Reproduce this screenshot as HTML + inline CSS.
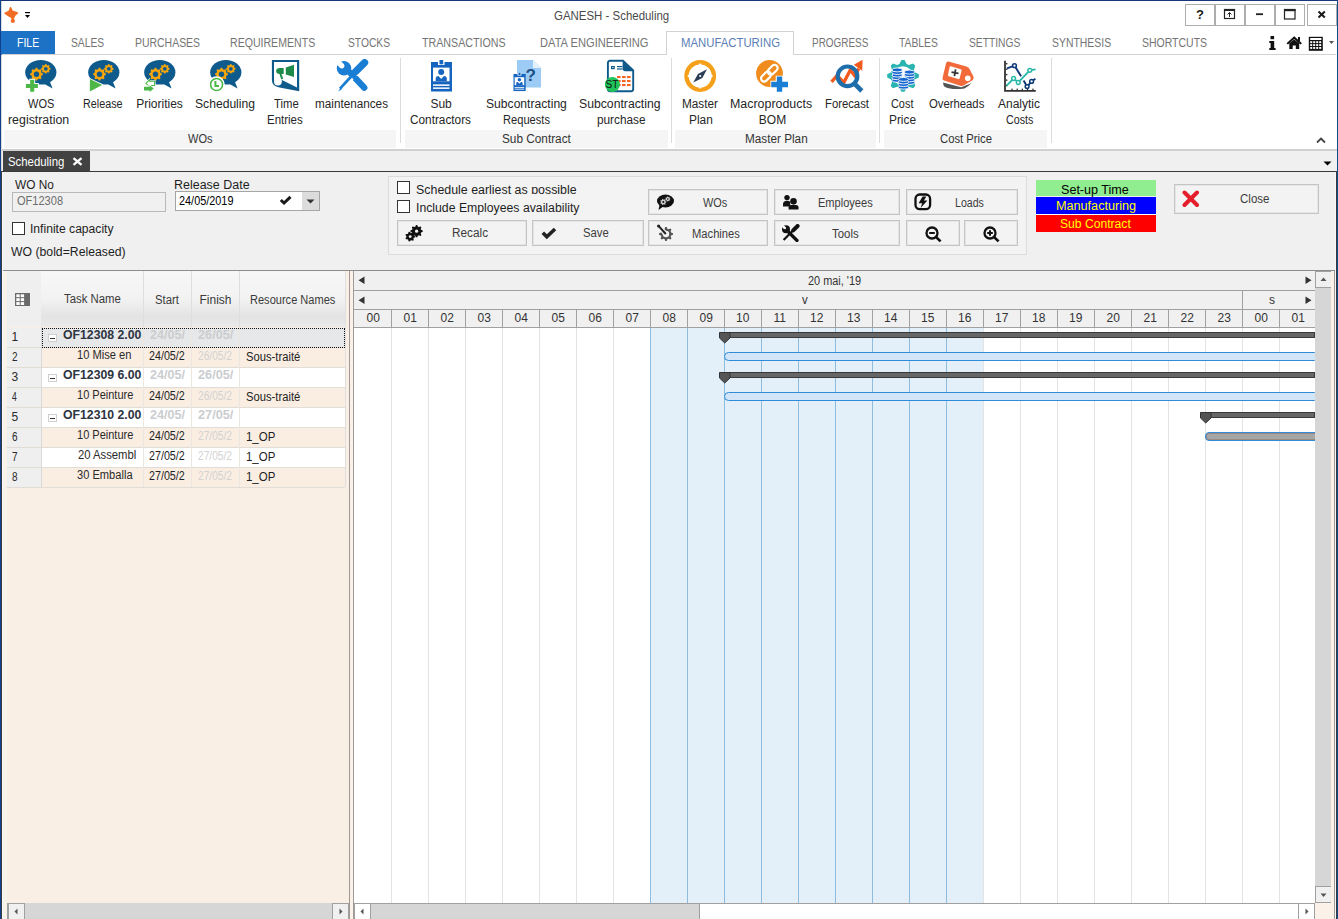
<!DOCTYPE html><html><head><meta charset="utf-8"><style>html,body{margin:0;padding:0;}body{width:1338px;height:919px;overflow:hidden;position:relative;background:#ffffff;font-family:'Liberation Sans', sans-serif;}.a{position:absolute;}</style></head><body><div class="a" style="left:0px;top:0px;width:1338px;height:919px;background:#ffffff;"></div>
<div class="a" style="left:0px;top:151px;width:1338px;height:768px;background:#f0f0f0;"></div>
<div class="a" style="left:553.50px;top:10px;font:400 12px/12px 'Liberation Sans', sans-serif;color:#4a4a4a;white-space:nowrap;transform:scaleX(0.9542);transform-origin:0 0;">GANESH - Scheduling</div>
<svg class="a" style="left:4px;top:6px;" width="16" height="18" viewBox="0 0 16 18"><path d="M6.5 1.6 L8.3 5.2 L13.4 7 L10.6 9.6 L9.6 12 L7.2 11 L4.8 9.8 L1 7.2 L5 5.4 Z" fill="#f26c23" stroke="#f26c23" stroke-width="1.4" stroke-linejoin="round"/><path d="M8 10.5 L8.8 14" stroke="#f26c23" stroke-width="2.2"/><circle cx="8.8" cy="14.9" r="2.1" fill="#f26c23"/></svg><svg class="a" style="left:24px;top:11px;" width="8" height="8" viewBox="0 0 8 8"><rect x="1" y="1" width="5" height="1.2" fill="#000"/><path d="M1 3.9 L6 3.9 L3.5 6.9 Z" fill="#000"/></svg>
<div class="a" style="left:1185px;top:4px;width:30px;height:22px;box-sizing:border-box;background:#ffffff;border:1px solid #adadad;"></div>
<div class="a" style="left:1215px;top:4px;width:30px;height:22px;box-sizing:border-box;background:#ffffff;border:1px solid #adadad;"></div>
<div class="a" style="left:1245px;top:4px;width:30px;height:22px;box-sizing:border-box;background:#ffffff;border:1px solid #adadad;"></div>
<div class="a" style="left:1275px;top:4px;width:30px;height:22px;box-sizing:border-box;background:#ffffff;border:1px solid #adadad;"></div>
<div class="a" style="left:1307px;top:4px;width:30px;height:22px;box-sizing:border-box;background:#ffffff;border:1px solid #adadad;"></div>
<svg class="a" style="left:1194px;top:8px;" width="12" height="13" viewBox="0 0 12 13"><text x="6" y="11" text-anchor="middle" font-family="Liberation Sans" font-weight="700" font-size="13" fill="#1a1a1a">?</text></svg><svg class="a" style="left:1223px;top:8px;" width="14" height="12" viewBox="0 0 14 12"><rect x="1.5" y="1.5" width="10" height="9" fill="none" stroke="#222" stroke-width="1.2"/><rect x="1" y="1" width="11" height="2" fill="#222"/><path d="M6.5 9 V4.5 M4.5 6.5 L6.5 4.5 L8.5 6.5" fill="none" stroke="#222" stroke-width="1"/></svg><svg class="a" style="left:1255px;top:12px;" width="10" height="4" viewBox="0 0 10 4"><rect x="1" y="1.3" width="7" height="1.8" fill="#222"/></svg><svg class="a" style="left:1283px;top:8px;" width="14" height="12" viewBox="0 0 14 12"><rect x="1.5" y="1.5" width="10.5" height="9.5" fill="none" stroke="#222" stroke-width="1.2"/><rect x="1" y="1" width="11.5" height="2.2" fill="#222"/></svg><svg class="a" style="left:1317px;top:10px;" width="10" height="9" viewBox="0 0 10 9"><path d="M1.5 1.5 L7.8 7.5 M7.8 1.5 L1.5 7.5" stroke="#1a1a1a" stroke-width="2"/></svg>
<div class="a" style="left:1px;top:31px;width:54px;height:24px;background:#1e72c6;"></div>
<div class="a" style="left:16.73px;top:37.2px;font:400 12px/12px 'Liberation Sans', sans-serif;color:#ffffff;white-space:nowrap;transform:scaleX(0.8750);transform-origin:0 0;">FILE</div>
<div class="a" style="left:2px;top:54px;width:1334px;height:1px;background:#d2d2d2;"></div>
<div class="a" style="left:666px;top:31px;width:128px;height:24px;box-sizing:border-box;background:#ffffff;border:1px solid #d2d2d2;border-bottom:none;"></div>
<div class="a" style="left:70.54px;top:37px;font:400 12px/12px 'Liberation Sans', sans-serif;color:#747474;white-space:nowrap;transform:scaleX(0.8568);transform-origin:0 0;">SALES</div>
<div class="a" style="left:134.63px;top:37px;font:400 12px/12px 'Liberation Sans', sans-serif;color:#747474;white-space:nowrap;transform:scaleX(0.8712);transform-origin:0 0;">PURCHASES</div>
<div class="a" style="left:230.42px;top:37px;font:400 12px/12px 'Liberation Sans', sans-serif;color:#747474;white-space:nowrap;transform:scaleX(0.8811);transform-origin:0 0;">REQUIREMENTS</div>
<div class="a" style="left:348.15px;top:37px;font:400 12px/12px 'Liberation Sans', sans-serif;color:#747474;white-space:nowrap;transform:scaleX(0.8542);transform-origin:0 0;">STOCKS</div>
<div class="a" style="left:422.40px;top:37px;font:400 12px/12px 'Liberation Sans', sans-serif;color:#747474;white-space:nowrap;transform:scaleX(0.8904);transform-origin:0 0;">TRANSACTIONS</div>
<div class="a" style="left:540.47px;top:37px;font:400 12px/12px 'Liberation Sans', sans-serif;color:#747474;white-space:nowrap;transform:scaleX(0.9278);transform-origin:0 0;">DATA ENGINEERING</div>
<div class="a" style="left:680.65px;top:37px;font:400 12px/12px 'Liberation Sans', sans-serif;color:#5b7fb4;white-space:nowrap;transform:scaleX(0.9456);transform-origin:0 0;">MANUFACTURING</div>
<div class="a" style="left:811.67px;top:37px;font:400 12px/12px 'Liberation Sans', sans-serif;color:#747474;white-space:nowrap;transform:scaleX(0.8284);transform-origin:0 0;">PROGRESS</div>
<div class="a" style="left:899.30px;top:37px;font:400 12px/12px 'Liberation Sans', sans-serif;color:#747474;white-space:nowrap;transform:scaleX(0.8600);transform-origin:0 0;">TABLES</div>
<div class="a" style="left:969.15px;top:37px;font:400 12px/12px 'Liberation Sans', sans-serif;color:#747474;white-space:nowrap;transform:scaleX(0.8542);transform-origin:0 0;">SETTINGS</div>
<div class="a" style="left:1052.13px;top:37px;font:400 12px/12px 'Liberation Sans', sans-serif;color:#747474;white-space:nowrap;transform:scaleX(0.8687);transform-origin:0 0;">SYNTHESIS</div>
<div class="a" style="left:1142.33px;top:37px;font:400 12px/12px 'Liberation Sans', sans-serif;color:#747474;white-space:nowrap;transform:scaleX(0.8740);transform-origin:0 0;">SHORTCUTS</div>
<svg class="a" style="left:1268px;top:35px;" width="9" height="16" viewBox="0 0 9 16"><rect x="2.5" y="1" width="3.6" height="3.2" fill="#111"/><path d="M1.3 6 H6.2 V13 H7.6 V15 H1.3 V13 H2.6 V8 H1.3 Z" fill="#111"/></svg><svg class="a" style="left:1286px;top:35px;" width="17" height="15" viewBox="0 0 17 15"><path d="M8.2 1.2 L16 8.2 L14.4 9.4 L8.2 4 L2 9.4 L0.5 8.2 Z" fill="#111"/><path d="M3.3 8.3 L8.2 4.4 L13.2 8.3 V14 H9.8 V10.5 H6.7 V14 H3.3 Z" fill="#111"/><rect x="12" y="2" width="2" height="4" fill="#111"/></svg><svg class="a" style="left:1308px;top:36px;" width="16" height="16" viewBox="0 0 16 16"><rect x="0.8" y="0.8" width="14" height="14" fill="#111"/><rect x="2.2" y="2" width="11.2" height="2" fill="#fff"/><rect x="2.2" y="5.2" width="2" height="1.9" fill="#fff"/><rect x="5.2" y="5.2" width="2" height="1.9" fill="#fff"/><rect x="8.2" y="5.2" width="2" height="1.9" fill="#fff"/><rect x="11.2" y="5.2" width="2" height="1.9" fill="#fff"/><rect x="2.2" y="8.1" width="2" height="1.9" fill="#fff"/><rect x="5.2" y="8.1" width="2" height="1.9" fill="#fff"/><rect x="8.2" y="8.1" width="2" height="1.9" fill="#fff"/><rect x="11.2" y="8.1" width="2" height="1.9" fill="#fff"/><rect x="2.2" y="11.0" width="2" height="1.9" fill="#fff"/><rect x="5.2" y="11.0" width="2" height="1.9" fill="#fff"/><rect x="8.2" y="11.0" width="2" height="1.9" fill="#fff"/><rect x="11.2" y="11.0" width="2" height="1.9" fill="#fff"/></svg><svg class="a" style="left:1328px;top:40px;" width="7" height="5" viewBox="0 0 7 5"><path d="M1 1 L6 1 L3.5 4 Z" fill="#555"/></svg>
<div class="a" style="left:4px;top:130px;width:392px;height:18px;background:#f5f5f5;"></div>
<div class="a" style="left:405px;top:130px;width:263px;height:18px;background:#f5f5f5;"></div>
<div class="a" style="left:675px;top:130px;width:201px;height:18px;background:#f5f5f5;"></div>
<div class="a" style="left:884px;top:130px;width:163px;height:18px;background:#f5f5f5;"></div>
<div class="a" style="left:400px;top:58px;width:1px;height:85px;background:#dcdcdc;"></div>
<div class="a" style="left:671px;top:58px;width:1px;height:85px;background:#dcdcdc;"></div>
<div class="a" style="left:879px;top:58px;width:1px;height:85px;background:#dcdcdc;"></div>
<div class="a" style="left:1051px;top:58px;width:1px;height:85px;background:#dcdcdc;"></div>
<div class="a" style="left:1px;top:149px;width:1336px;height:2px;background:#d0d0d0;"></div>
<div class="a" style="left:188.20px;top:133px;font:400 12px/12px 'Liberation Sans', sans-serif;color:#333333;white-space:nowrap;transform:scaleX(0.9185);transform-origin:0 0;">WOs</div>
<div class="a" style="left:502.32px;top:133px;font:400 12px/12px 'Liberation Sans', sans-serif;color:#333333;white-space:nowrap;transform:scaleX(0.9826);transform-origin:0 0;">Sub Contract</div>
<div class="a" style="left:744.82px;top:133px;font:400 12px/12px 'Liberation Sans', sans-serif;color:#333333;white-space:nowrap;transform:scaleX(0.9790);transform-origin:0 0;">Master Plan</div>
<div class="a" style="left:940.10px;top:133px;font:400 12px/12px 'Liberation Sans', sans-serif;color:#333333;white-space:nowrap;transform:scaleX(0.9400);transform-origin:0 0;">Cost Price</div>
<div class="a" style="left:27.50px;top:98px;font:400 12px/12px 'Liberation Sans', sans-serif;color:#262626;white-space:nowrap;transform:scaleX(0.9179);transform-origin:0 0;">WOS</div>
<div class="a" style="left:7.97px;top:114px;font:400 12px/12px 'Liberation Sans', sans-serif;color:#262626;white-space:nowrap;transform:scaleX(1.0310);transform-origin:0 0;">registration</div>
<div class="a" style="left:83.40px;top:98px;font:400 12px/12px 'Liberation Sans', sans-serif;color:#262626;white-space:nowrap;transform:scaleX(0.8977);transform-origin:0 0;">Release</div>
<div class="a" style="left:136.20px;top:98px;font:400 12px/12px 'Liberation Sans', sans-serif;color:#262626;white-space:nowrap;">Priorities</div>
<div class="a" style="left:195.09px;top:98px;font:400 12px/12px 'Liberation Sans', sans-serif;color:#262626;white-space:nowrap;transform:scaleX(1.0103);transform-origin:0 0;">Scheduling</div>
<div class="a" style="left:273.50px;top:98px;font:400 12px/12px 'Liberation Sans', sans-serif;color:#262626;white-space:nowrap;transform:scaleX(0.9423);transform-origin:0 0;">Time</div>
<div class="a" style="left:266.64px;top:114px;font:400 12px/12px 'Liberation Sans', sans-serif;color:#262626;white-space:nowrap;transform:scaleX(0.9556);transform-origin:0 0;">Entries</div>
<div class="a" style="left:315.32px;top:98px;font:400 12px/12px 'Liberation Sans', sans-serif;color:#262626;white-space:nowrap;transform:scaleX(0.9770);transform-origin:0 0;">maintenances</div>
<div class="a" style="left:430.40px;top:98px;font:400 12px/12px 'Liberation Sans', sans-serif;color:#262626;white-space:nowrap;">Sub</div>
<div class="a" style="left:409.90px;top:114px;font:400 12px/12px 'Liberation Sans', sans-serif;color:#262626;white-space:nowrap;transform:scaleX(0.9839);transform-origin:0 0;">Contractors</div>
<div class="a" style="left:485.69px;top:98px;font:400 12px/12px 'Liberation Sans', sans-serif;color:#262626;white-space:nowrap;transform:scaleX(1.0101);transform-origin:0 0;">Subcontracting</div>
<div class="a" style="left:502.77px;top:114px;font:400 12px/12px 'Liberation Sans', sans-serif;color:#262626;white-space:nowrap;transform:scaleX(0.9260);transform-origin:0 0;">Requests</div>
<div class="a" style="left:579.28px;top:98px;font:400 12px/12px 'Liberation Sans', sans-serif;color:#262626;white-space:nowrap;transform:scaleX(1.0177);transform-origin:0 0;">Subcontracting</div>
<div class="a" style="left:596.92px;top:114px;font:400 12px/12px 'Liberation Sans', sans-serif;color:#262626;white-space:nowrap;transform:scaleX(0.9833);transform-origin:0 0;">purchase</div>
<div class="a" style="left:681.52px;top:98px;font:400 12px/12px 'Liberation Sans', sans-serif;color:#262626;white-space:nowrap;transform:scaleX(0.9806);transform-origin:0 0;">Master</div>
<div class="a" style="left:689.01px;top:114px;font:400 12px/12px 'Liberation Sans', sans-serif;color:#262626;white-space:nowrap;transform:scaleX(0.9909);transform-origin:0 0;">Plan</div>
<div class="a" style="left:730.37px;top:98px;font:400 12px/12px 'Liberation Sans', sans-serif;color:#262626;white-space:nowrap;transform:scaleX(1.0346);transform-origin:0 0;">Macroproducts</div>
<div class="a" style="left:758.80px;top:114px;font:400 12px/12px 'Liberation Sans', sans-serif;color:#262626;white-space:nowrap;">BOM</div>
<div class="a" style="left:824.66px;top:98px;font:400 12px/12px 'Liberation Sans', sans-serif;color:#262626;white-space:nowrap;transform:scaleX(0.9413);transform-origin:0 0;">Forecast</div>
<div class="a" style="left:891.30px;top:98px;font:400 12px/12px 'Liberation Sans', sans-serif;color:#262626;white-space:nowrap;transform:scaleX(0.9080);transform-origin:0 0;">Cost</div>
<div class="a" style="left:888.51px;top:114px;font:400 12px/12px 'Liberation Sans', sans-serif;color:#262626;white-space:nowrap;transform:scaleX(0.9885);transform-origin:0 0;">Price</div>
<div class="a" style="left:929.30px;top:98px;font:400 12px/12px 'Liberation Sans', sans-serif;color:#262626;white-space:nowrap;transform:scaleX(0.9424);transform-origin:0 0;">Overheads</div>
<div class="a" style="left:998.00px;top:98px;font:400 12px/12px 'Liberation Sans', sans-serif;color:#262626;white-space:nowrap;">Analytic</div>
<div class="a" style="left:1006.40px;top:114px;font:400 12px/12px 'Liberation Sans', sans-serif;color:#262626;white-space:nowrap;transform:scaleX(0.8903);transform-origin:0 0;">Costs</div>
<svg class="a" style="left:25px;top:59px;" width="33" height="34" viewBox="0 0 33 34"><ellipse cx="15.8" cy="13.2" rx="15.6" ry="12.3" fill="#0e5a8c"/><path d="M14 22 L27.6 29.6 L24 20.5 Z" fill="#0e5a8c"/><path d="M17.87 14.57 L17.87 15.83 L16.38 16.68 L16.00 17.60 L16.45 19.26 L15.56 20.15 L13.90 19.70 L12.98 20.08 L12.13 21.57 L10.87 21.57 L10.02 20.08 L9.10 19.70 L7.44 20.15 L6.55 19.26 L7.00 17.60 L6.62 16.68 L5.13 15.83 L5.13 14.57 L6.62 13.72 L7.00 12.80 L6.55 11.14 L7.44 10.25 L9.10 10.70 L10.02 10.32 L10.87 8.83 L12.13 8.83 L12.98 10.32 L13.90 10.70 L15.56 10.25 L16.45 11.14 L16.00 12.80 L16.38 13.72Z" fill="#f7a50c"/><circle cx="11.5" cy="15.2" r="2.7" fill="#0e5a8c"/><path d="M25.58 9.33 L25.58 10.27 L24.44 10.90 L24.15 11.59 L24.51 12.85 L23.85 13.51 L22.59 13.15 L21.90 13.44 L21.27 14.58 L20.33 14.58 L19.70 13.44 L19.01 13.15 L17.75 13.51 L17.09 12.85 L17.45 11.59 L17.16 10.90 L16.02 10.27 L16.02 9.33 L17.16 8.70 L17.45 8.01 L17.09 6.75 L17.75 6.09 L19.01 6.45 L19.70 6.16 L20.33 5.02 L21.27 5.02 L21.90 6.16 L22.59 6.45 L23.85 6.09 L24.51 6.75 L24.15 8.01 L24.44 8.70Z" fill="#f7a50c"/><circle cx="20.8" cy="9.8" r="1.9" fill="#0e5a8c"/><path d="M0 27 H13.8 M7.2 19.8 V33.8" stroke="#fff" stroke-width="6"/><path d="M0.9 27 H12.9 M7.2 20.8 V32.8" stroke="#4db848" stroke-width="4.1"/></svg><svg class="a" style="left:88px;top:59px;" width="33" height="34" viewBox="0 0 33 34"><ellipse cx="15.8" cy="13.2" rx="15.6" ry="12.3" fill="#0e5a8c"/><path d="M14 22 L27.6 29.6 L24 20.5 Z" fill="#0e5a8c"/><path d="M17.87 14.57 L17.87 15.83 L16.38 16.68 L16.00 17.60 L16.45 19.26 L15.56 20.15 L13.90 19.70 L12.98 20.08 L12.13 21.57 L10.87 21.57 L10.02 20.08 L9.10 19.70 L7.44 20.15 L6.55 19.26 L7.00 17.60 L6.62 16.68 L5.13 15.83 L5.13 14.57 L6.62 13.72 L7.00 12.80 L6.55 11.14 L7.44 10.25 L9.10 10.70 L10.02 10.32 L10.87 8.83 L12.13 8.83 L12.98 10.32 L13.90 10.70 L15.56 10.25 L16.45 11.14 L16.00 12.80 L16.38 13.72Z" fill="#f7a50c"/><circle cx="11.5" cy="15.2" r="2.7" fill="#0e5a8c"/><path d="M25.58 9.33 L25.58 10.27 L24.44 10.90 L24.15 11.59 L24.51 12.85 L23.85 13.51 L22.59 13.15 L21.90 13.44 L21.27 14.58 L20.33 14.58 L19.70 13.44 L19.01 13.15 L17.75 13.51 L17.09 12.85 L17.45 11.59 L17.16 10.90 L16.02 10.27 L16.02 9.33 L17.16 8.70 L17.45 8.01 L17.09 6.75 L17.75 6.09 L19.01 6.45 L19.70 6.16 L20.33 5.02 L21.27 5.02 L21.90 6.16 L22.59 6.45 L23.85 6.09 L24.51 6.75 L24.15 8.01 L24.44 8.70Z" fill="#f7a50c"/><circle cx="20.8" cy="9.8" r="1.9" fill="#0e5a8c"/><path d="M0.5 18.5 L15.5 25.5 L0.5 33 Z" fill="#fff"/><path d="M1.9 20 L14.2 26 L1.9 32.5 Z" fill="#4db848"/></svg><svg class="a" style="left:144px;top:59px;" width="33" height="34" viewBox="0 0 33 34"><ellipse cx="15.8" cy="13.2" rx="15.6" ry="12.3" fill="#0e5a8c"/><path d="M14 22 L27.6 29.6 L24 20.5 Z" fill="#0e5a8c"/><path d="M17.87 14.57 L17.87 15.83 L16.38 16.68 L16.00 17.60 L16.45 19.26 L15.56 20.15 L13.90 19.70 L12.98 20.08 L12.13 21.57 L10.87 21.57 L10.02 20.08 L9.10 19.70 L7.44 20.15 L6.55 19.26 L7.00 17.60 L6.62 16.68 L5.13 15.83 L5.13 14.57 L6.62 13.72 L7.00 12.80 L6.55 11.14 L7.44 10.25 L9.10 10.70 L10.02 10.32 L10.87 8.83 L12.13 8.83 L12.98 10.32 L13.90 10.70 L15.56 10.25 L16.45 11.14 L16.00 12.80 L16.38 13.72Z" fill="#f7a50c"/><circle cx="11.5" cy="15.2" r="2.7" fill="#0e5a8c"/><path d="M25.58 9.33 L25.58 10.27 L24.44 10.90 L24.15 11.59 L24.51 12.85 L23.85 13.51 L22.59 13.15 L21.90 13.44 L21.27 14.58 L20.33 14.58 L19.70 13.44 L19.01 13.15 L17.75 13.51 L17.09 12.85 L17.45 11.59 L17.16 10.90 L16.02 10.27 L16.02 9.33 L17.16 8.70 L17.45 8.01 L17.09 6.75 L17.75 6.09 L19.01 6.45 L19.70 6.16 L20.33 5.02 L21.27 5.02 L21.90 6.16 L22.59 6.45 L23.85 6.09 L24.51 6.75 L24.15 8.01 L24.44 8.70Z" fill="#f7a50c"/><circle cx="20.8" cy="9.8" r="1.9" fill="#0e5a8c"/><path d="M0.5 24.3 L6 18.8 V21.2 H11.6 V27.5 H6 V29.8 Z" fill="#fff"/><path d="M1.9 24.3 L5.6 20.6 V22.3 H10.6 V26.5 H5.6 V28 Z" fill="#fff" stroke="#4db848" stroke-width="1.1"/><path d="M-0.5 26.5 H5 V24.8 L11 29.6 L5 34.3 V32.6 H-0.5 Z" fill="#fff"/><path d="M0 27.7 H5.6 V26.2 L9.8 29.6 L5.6 33 V31.5 H0 Z" fill="#4db848"/></svg><svg class="a" style="left:210px;top:59px;" width="33" height="34" viewBox="0 0 33 34"><ellipse cx="15.8" cy="13.2" rx="15.6" ry="12.3" fill="#0e5a8c"/><path d="M14 22 L27.6 29.6 L24 20.5 Z" fill="#0e5a8c"/><path d="M17.87 14.57 L17.87 15.83 L16.38 16.68 L16.00 17.60 L16.45 19.26 L15.56 20.15 L13.90 19.70 L12.98 20.08 L12.13 21.57 L10.87 21.57 L10.02 20.08 L9.10 19.70 L7.44 20.15 L6.55 19.26 L7.00 17.60 L6.62 16.68 L5.13 15.83 L5.13 14.57 L6.62 13.72 L7.00 12.80 L6.55 11.14 L7.44 10.25 L9.10 10.70 L10.02 10.32 L10.87 8.83 L12.13 8.83 L12.98 10.32 L13.90 10.70 L15.56 10.25 L16.45 11.14 L16.00 12.80 L16.38 13.72Z" fill="#f7a50c"/><circle cx="11.5" cy="15.2" r="2.7" fill="#0e5a8c"/><path d="M25.58 9.33 L25.58 10.27 L24.44 10.90 L24.15 11.59 L24.51 12.85 L23.85 13.51 L22.59 13.15 L21.90 13.44 L21.27 14.58 L20.33 14.58 L19.70 13.44 L19.01 13.15 L17.75 13.51 L17.09 12.85 L17.45 11.59 L17.16 10.90 L16.02 10.27 L16.02 9.33 L17.16 8.70 L17.45 8.01 L17.09 6.75 L17.75 6.09 L19.01 6.45 L19.70 6.16 L20.33 5.02 L21.27 5.02 L21.90 6.16 L22.59 6.45 L23.85 6.09 L24.51 6.75 L24.15 8.01 L24.44 8.70Z" fill="#f7a50c"/><circle cx="20.8" cy="9.8" r="1.9" fill="#0e5a8c"/><circle cx="6.6" cy="25.5" r="8.2" fill="#fff"/><circle cx="6.6" cy="25.5" r="6" fill="#fff" stroke="#4db848" stroke-width="1.6"/><path d="M5.4 22 V27 H9" fill="none" stroke="#4db848" stroke-width="2"/></svg><svg class="a" style="left:271px;top:59px;" width="30" height="33" viewBox="0 0 30 33"><path d="M0.9 0.9 H28.2 V32.2 L8.5 28.6 Q0.9 27.2 0.9 21 Z" fill="#0e5a8a"/><path d="M3 3 H26 V28.6 L11.5 21.2 L3 21.2 Z" fill="#fff"/><circle cx="6.9" cy="22.6" r="3.9" fill="#fff"/><path d="M12.7 9 H9 Q5.1 9 5.1 12 Q5.1 15 9 15 H12.7 Z" fill="#1e8a4a"/><path d="M9.4 15 L11.3 20.1" stroke="#1e8a4a" stroke-width="2"/><path d="M14.8 8.6 L23 5.7 V18.1 L14.8 15.6 Z" fill="#1e8a4a"/></svg><svg class="a" style="left:336px;top:59px;" width="34" height="34" viewBox="0 0 34 34"><path d="M14.5 14 L28.2 28.6" stroke="#1a7fd4" stroke-width="6.4" stroke-linecap="round"/><circle cx="8" cy="9.3" r="7.2" fill="#1a7fd4"/><path d="M5.6 6.6 L0.2 1.2" stroke="#fff" stroke-width="5.2"/><circle cx="5.8" cy="6.8" r="2.6" fill="#fff"/><path d="M16.4 15.3 L19.5 18.6" stroke="#fff" stroke-width="7.6"/><path d="M28.6 3.6 L19.2 13" stroke="#1a7fd4" stroke-width="7.2" stroke-linecap="round"/><path d="M19.5 12.5 L15.5 16.8" stroke="#1a7fd4" stroke-width="4.6"/><path d="M16.5 16 L4 29.6" stroke="#1a7fd4" stroke-width="2.8"/><path d="M4.6 28.6 L2.2 32.4 L5.8 30.2 Z" fill="#1a7fd4"/><path d="M15 14.2 L20 19.6" stroke="#1a7fd4" stroke-width="4.6"/></svg><svg class="a" style="left:431px;top:60px;" width="21" height="32" viewBox="0 0 21 32"><rect x="0" y="2" width="21" height="29.5" fill="#1565c0"/><rect x="7" y="0" width="6.5" height="5" fill="#fff"/><rect x="8.5" y="0" width="3.7" height="4.3" fill="#1565c0"/><rect x="2" y="7.6" width="16.5" height="13.7" fill="#fff"/><circle cx="10.2" cy="12" r="3" fill="#1565c0"/><path d="M4.7 21.3 V18 Q5 16 7.5 16 L10.2 19 L13 16 Q15.5 16 15.8 18 V21.3 Z" fill="#1565c0"/><rect x="2" y="24.4" width="16.5" height="1.5" fill="#fff"/><rect x="2" y="27.4" width="16.5" height="1.5" fill="#fff"/></svg><svg class="a" style="left:512px;top:59px;" width="30" height="34" viewBox="0 0 30 34"><path d="M5 1 H21 L29 9 V28.6 H5 Z" fill="#9ccbf5"/><path d="M21 1 V9 H29 Z" fill="#e4f1fc"/><text x="18.6" y="22.4" text-anchor="middle" font-family="Liberation Sans" font-weight="700" font-size="17" fill="#1b4f86">?</text><g transform="translate(1.5 13.8) scale(0.58)"><rect x="0" y="2" width="21" height="29.5" fill="#1565c0"/><rect x="7" y="0" width="6.5" height="5" fill="#fff"/><rect x="8.5" y="0" width="3.7" height="4.3" fill="#1565c0"/><rect x="2" y="7.6" width="16.5" height="13.7" fill="#fff"/><circle cx="10.2" cy="12" r="3" fill="#1565c0"/><path d="M4.7 21.3 V18 Q5 16 7.5 16 L10.2 19 L13 16 Q15.5 16 15.8 18 V21.3 Z" fill="#1565c0"/><rect x="2" y="24.4" width="16.5" height="1.5" fill="#fff"/><rect x="2" y="27.4" width="16.5" height="1.5" fill="#fff"/></g></svg><svg class="a" style="left:604px;top:59px;" width="32" height="34" viewBox="0 0 32 34"><path d="M6 1.8 H19 L29.2 11.5 V30 Q29.2 32.2 27 32.2 H6 Q3.9 32.2 3.9 30 V4 Q3.9 1.8 6 1.8 Z" fill="#fff" stroke="#0e5a8a" stroke-width="1.9"/><path d="M18.6 1.2 L29.8 12.2 H21.4 Q18.6 12 18.6 9.5 Z" fill="#0e5a8a"/><rect x="7.6" y="7.6" width="2.6" height="2" fill="none" stroke="#0e5a8a" stroke-width="1.2"/><rect x="13" y="7" width="5.5" height="1.2" fill="#0e5a8a"/><rect x="13" y="9.4" width="5.5" height="1.2" fill="#0e5a8a"/><rect x="13" y="17" width="3.6" height="2.1" fill="#f26522"/><rect x="18" y="17" width="3.6" height="2.1" fill="#f26522"/><rect x="23" y="17" width="3.6" height="2.1" fill="#f26522"/><rect x="13" y="21" width="3.6" height="2.1" fill="#f26522"/><rect x="18" y="21" width="3.6" height="2.1" fill="#f26522"/><rect x="23" y="21" width="3.6" height="2.1" fill="#f26522"/><rect x="13" y="25" width="3.6" height="2.1" fill="#f26522"/><rect x="18" y="25" width="3.6" height="2.1" fill="#f26522"/><rect x="23" y="25" width="3.6" height="2.1" fill="#f26522"/><circle cx="8.4" cy="25.5" r="7.5" fill="#20c35a"/><text x="8" y="29" text-anchor="middle" font-family="Liberation Sans" font-size="10" fill="#111">ST</text></svg><svg class="a" style="left:684px;top:60px;" width="33" height="33" viewBox="0 0 33 33"><circle cx="16.2" cy="16" r="13.7" fill="none" stroke="#f5a01a" stroke-width="4.4"/><rect x="15.2" y="3.6" width="2" height="2" fill="#fff"/><rect x="15.2" y="26.4" width="2" height="2" fill="#fff"/><rect x="3.8" y="15" width="2" height="2" fill="#fff"/><rect x="26.6" y="15" width="2" height="2" fill="#fff"/><path d="M23 9.2 L18.3 18 L9.2 22.6 L14 14 Z" fill="#2a3b55"/><circle cx="16.2" cy="16" r="1.1" fill="#fff"/></svg><svg class="a" style="left:755px;top:59px;" width="35" height="34" viewBox="0 0 35 34"><circle cx="14.5" cy="14.5" r="13.4" fill="#f08c1e"/><g fill="none" stroke="#fff" stroke-width="2.2"><rect x="7.9" y="11.9" width="6.2" height="11.4" rx="3.1" transform="rotate(45 11 17.6)"/><rect x="14.6" y="5.1" width="6.2" height="11.4" rx="3.1" transform="rotate(45 17.7 10.8)"/></g><path d="M15.5 25.5 H33.6 M24.5 16.8 V33.4" stroke="#fff" stroke-width="7.6"/><path d="M16.2 25.5 H33 M24.5 17.6 V32.8" stroke="#1a7fd4" stroke-width="5.4"/></svg><svg class="a" style="left:830px;top:59px;" width="34" height="34" viewBox="0 0 34 34"><path d="M1.5 22.8 L7.2 16.4 L13.8 23.6 L20.3 11 L24.6 16.6 L28.8 9.6" fill="none" stroke="#f25a1e" stroke-width="3.3" stroke-linejoin="miter"/><path d="M23.8 5.8 L32.6 0.8 L32.2 11.8 Z" fill="#f25a1e"/><circle cx="17.5" cy="17.3" r="9.8" fill="none" stroke="#1f6eac" stroke-width="4.2"/><path d="M24.2 24.4 L31.8 32" stroke="#1f6eac" stroke-width="4.6"/></svg><svg class="a" style="left:886px;top:59px;" width="34" height="34" viewBox="0 0 34 34"><path d="M32.82 15.34 L32.82 18.46 L28.87 20.50 L27.94 22.75 L29.29 26.99 L27.09 29.19 L22.85 27.84 L20.60 28.77 L18.56 32.72 L15.44 32.72 L13.40 28.77 L11.15 27.84 L6.91 29.19 L4.71 26.99 L6.06 22.75 L5.13 20.50 L1.18 18.46 L1.18 15.34 L5.13 13.30 L6.06 11.05 L4.71 6.81 L6.91 4.61 L11.15 5.96 L13.40 5.03 L15.44 1.08 L18.56 1.08 L20.60 5.03 L22.85 5.96 L27.09 4.61 L29.29 6.81 L27.94 11.05 L28.87 13.30Z" fill="#2ab4b0"/><circle cx="17" cy="16.9" r="0.1" fill="#2ab4b0"/><circle cx="17" cy="16.9" r="9.6" fill="#fff"/><ellipse cx="11.2" cy="21.30" rx="5.2" ry="2" fill="#1565d0" stroke="#fff" stroke-width="0.9"/><ellipse cx="11.2" cy="18.70" rx="5.2" ry="2" fill="#1565d0" stroke="#fff" stroke-width="0.9"/><ellipse cx="11.2" cy="16.10" rx="5.2" ry="2" fill="#1565d0" stroke="#fff" stroke-width="0.9"/><ellipse cx="11.2" cy="13.50" rx="5.2" ry="2" fill="#1565d0" stroke="#fff" stroke-width="0.9"/><ellipse cx="11.2" cy="10.90" rx="5.2" ry="2" fill="#1565d0" stroke="#fff" stroke-width="0.9"/><ellipse cx="23.5" cy="23.50" rx="5.2" ry="2" fill="#1565d0" stroke="#fff" stroke-width="0.9"/><ellipse cx="23.5" cy="20.90" rx="5.2" ry="2" fill="#1565d0" stroke="#fff" stroke-width="0.9"/><ellipse cx="23.5" cy="18.30" rx="5.2" ry="2" fill="#1565d0" stroke="#fff" stroke-width="0.9"/><ellipse cx="23.5" cy="15.70" rx="5.2" ry="2" fill="#1565d0" stroke="#fff" stroke-width="0.9"/><ellipse cx="23.5" cy="13.10" rx="5.2" ry="2" fill="#1565d0" stroke="#fff" stroke-width="0.9"/><ellipse cx="17.5" cy="28.20" rx="5.2" ry="2" fill="#1565d0" stroke="#fff" stroke-width="0.9"/><ellipse cx="17.5" cy="25.60" rx="5.2" ry="2" fill="#1565d0" stroke="#fff" stroke-width="0.9"/><ellipse cx="17.5" cy="23.00" rx="5.2" ry="2" fill="#1565d0" stroke="#fff" stroke-width="0.9"/><ellipse cx="17.5" cy="20.40" rx="5.2" ry="2" fill="#1565d0" stroke="#fff" stroke-width="0.9"/></svg><svg class="a" style="left:941px;top:59px;" width="35" height="32" viewBox="0 0 35 32"><path d="M2 23.4 L20.2 28.2 L30.3 24.2 Q27 28 23.5 29.4 Q15 30.5 9 29.4 Q3.5 28.5 2.6 26.5 Z" fill="#555"/><path d="M7.6 2.6 L25.4 7.5 Q27.6 8.2 28.8 10.4 L32.4 17.6 Q33.2 19.6 31.8 21 L22.5 26.5 Q21 27.3 19.3 26.8 L3 21.6 Q1.2 21 1.5 19 L5 4.4 Q5.6 2.2 7.6 2.6 Z" fill="#f26a3a"/><path d="M9.8 7.2 L19.8 10.2 Q20.8 10.5 20.6 11.5 L18.6 19.4 Q18.3 20.4 17.3 20.1 L7.8 17.2 Q6.8 16.9 7 15.9 L8.6 8 Q8.9 7 9.8 7.2 Z" fill="#fff"/><path d="M14.6 10.3 L13.4 17.2 M10.5 13.2 L17.5 14.4" stroke="#333" stroke-width="1.8"/><circle cx="26.8" cy="19.3" r="2.8" fill="#fff"/></svg><svg class="a" style="left:1003px;top:59px;" width="35" height="34" viewBox="0 0 35 34"><path d="M2 1.8 V31.8 H32.8" fill="none" stroke="#333" stroke-width="1.8"/><rect x="2.8" y="4.0" width="1.6" height="1.4" fill="#333"/><rect x="2.8" y="9.5" width="1.6" height="1.4" fill="#333"/><rect x="2.8" y="14.9" width="1.6" height="1.4" fill="#333"/><rect x="2.8" y="20.5" width="1.6" height="1.4" fill="#333"/><rect x="2.8" y="25.900000000000002" width="1.6" height="1.4" fill="#333"/><rect x="8.4" y="29.6" width="1.3" height="1.4" fill="#333"/><rect x="13.6" y="29.6" width="1.3" height="1.4" fill="#333"/><rect x="18.7" y="29.6" width="1.3" height="1.4" fill="#333"/><rect x="23.9" y="29.6" width="1.3" height="1.4" fill="#333"/><rect x="29.299999999999997" y="29.6" width="1.3" height="1.4" fill="#333"/><path d="M4 9.4 L11.5 6.7 L18.1 17.3" fill="none" stroke="#0f3a78" stroke-width="1.9"/><path d="M20.6 21.6 L24.1 27.6 L28.6 22.4 L32.4 19.7" fill="none" stroke="#0f3a78" stroke-width="1.9"/><path d="M3.6 26.6 L10.6 19.5 L15.2 23.5 L26.8 11.3 L32.6 10.4" fill="none" stroke="#2bbaaa" stroke-width="1.9"/><circle cx="11.5" cy="6.7" r="1.9" fill="#fff" stroke="#0f3a78" stroke-width="1.5"/><circle cx="24.1" cy="27.6" r="1.9" fill="#fff" stroke="#0f3a78" stroke-width="1.5"/><circle cx="28.6" cy="22.4" r="1.9" fill="#fff" stroke="#0f3a78" stroke-width="1.5"/><circle cx="10.6" cy="19.5" r="1.9" fill="#fff" stroke="#2bbaaa" stroke-width="1.5"/><circle cx="15.2" cy="23.5" r="1.9" fill="#fff" stroke="#2bbaaa" stroke-width="1.5"/><circle cx="26.8" cy="11.3" r="1.9" fill="#fff" stroke="#2bbaaa" stroke-width="1.5"/></svg>
<svg class="a" style="left:1316px;top:137px;" width="10" height="7" viewBox="0 0 10 7"><path d="M1 5.5 L5 1.5 L9 5.5" fill="none" stroke="#444" stroke-width="1.8"/></svg>
<div class="a" style="left:3px;top:151px;width:87px;height:20px;background:#424242;"></div>
<div class="a" style="left:7.55px;top:156px;font:400 12px/12px 'Liberation Sans', sans-serif;color:#ffffff;white-space:nowrap;transform:scaleX(0.9483);transform-origin:0 0;">Scheduling</div>
<svg class="a" style="left:72px;top:157px;" width="11" height="9" viewBox="0 0 11 9"><path d="M1.5 1.2 L9.5 7.8 M9.5 1.2 L1.5 7.8" stroke="#fff" stroke-width="2.3"/></svg>
<div class="a" style="left:2px;top:171px;width:1334px;height:1px;background:#3a3a3a;"></div>
<svg class="a" style="left:1323px;top:161px;" width="9" height="5" viewBox="0 0 9 5"><path d="M0.5 0.5 L8.5 0.5 L4.5 4.5 Z" fill="#000"/></svg>
<div class="a" style="left:15.30px;top:179.4px;font:400 12px/12px 'Liberation Sans', sans-serif;color:#1e1e1e;white-space:nowrap;transform:scaleX(0.9872);transform-origin:0 0;">WO No</div>
<div class="a" style="left:12px;top:192px;width:154px;height:20px;box-sizing:border-box;background:#f0f0f0;border:1px solid #b9b9b9;"></div>
<div class="a" style="left:17.00px;top:195.4px;font:400 12px/12px 'Liberation Sans', sans-serif;color:#6d6d6d;white-space:nowrap;transform:scaleX(0.9200);transform-origin:0 0;">OF12308</div>
<div class="a" style="left:173.86px;top:179.3px;font:400 12px/12px 'Liberation Sans', sans-serif;color:#1e1e1e;white-space:nowrap;transform:scaleX(1.0394);transform-origin:0 0;">Release Date</div>
<div class="a" style="left:175px;top:191px;width:145px;height:20px;box-sizing:border-box;background:#ffffff;border:1px solid #a5a5a5;"></div>
<div class="a" style="left:178.80px;top:195.4px;font:400 12px/12px 'Liberation Sans', sans-serif;color:#000;white-space:nowrap;transform:scaleX(0.9067);transform-origin:0 0;">24/05/2019</div>
<svg class="a" style="left:279px;top:194px;" width="14" height="12" viewBox="0 0 14 12"><path d="M1.8 6 L5 9 L11.5 2.8" fill="none" stroke="#1a1a1a" stroke-width="3"/></svg>
<div class="a" style="left:302px;top:192px;width:17px;height:18px;background:#dcdcdc;"></div>
<svg class="a" style="left:306px;top:199px;" width="9" height="5" viewBox="0 0 9 5"><path d="M0.5 0.5 L8.5 0.5 L4.5 4.5 Z" fill="#333"/></svg>
<div class="a" style="left:12px;top:222px;width:13px;height:13px;box-sizing:border-box;background:#ffffff;border:1px solid #333333;"></div>
<div class="a" style="left:30.39px;top:223.2px;font:400 12px/12px 'Liberation Sans', sans-serif;color:#1e1e1e;white-space:nowrap;transform:scaleX(1.0098);transform-origin:0 0;">Infinite capacity</div>
<div class="a" style="left:11.40px;top:246.2px;font:400 12px/12px 'Liberation Sans', sans-serif;color:#1e1e1e;white-space:nowrap;transform:scaleX(1.0196);transform-origin:0 0;">WO (bold=Released)</div>
<div class="a" style="left:388px;top:176px;width:639px;height:79px;box-sizing:border-box;background:#f3f3f3;border:1px solid #dcdcdc;"></div>
<div class="a" style="left:397px;top:181px;width:13px;height:13px;box-sizing:border-box;background:#ffffff;border:1px solid #333333;"></div>
<div class="a" style="left:415.57px;top:184.2px;font:400 12px/12px 'Liberation Sans', sans-serif;color:#1e1e1e;white-space:nowrap;transform:scaleX(1.0338);transform-origin:0 0;clip-path:inset(0 0 2.2px 0);">Schedule earliest as possible</div>
<div class="a" style="left:397px;top:200px;width:13px;height:13px;box-sizing:border-box;background:#ffffff;border:1px solid #333333;"></div>
<div class="a" style="left:415.58px;top:202.4px;font:400 12px/12px 'Liberation Sans', sans-serif;color:#1e1e1e;white-space:nowrap;transform:scaleX(1.0208);transform-origin:0 0;">Include Employees availability</div>
<div class="a" style="left:397px;top:220px;width:130px;height:26px;box-sizing:border-box;background:#f3f3f3;border:1px solid #c4c4c4;"></div>
<div class="a" style="left:398px;top:221px;width:128px;height:24px;box-sizing:border-box;border:1px solid #e6e6e6;"></div>
<div class="a" style="left:451.62px;top:227.3px;font:400 12px/12px 'Liberation Sans', sans-serif;color:#3c3c3c;white-space:nowrap;transform:scaleX(0.9829);transform-origin:0 0;">Recalc</div>
<div class="a" style="left:532px;top:220px;width:112px;height:26px;box-sizing:border-box;background:#f3f3f3;border:1px solid #c4c4c4;"></div>
<div class="a" style="left:533px;top:221px;width:110px;height:24px;box-sizing:border-box;border:1px solid #e6e6e6;"></div>
<div class="a" style="left:582.56px;top:227.2px;font:400 12px/12px 'Liberation Sans', sans-serif;color:#3c3c3c;white-space:nowrap;transform:scaleX(0.9423);transform-origin:0 0;">Save</div>
<div class="a" style="left:648px;top:189px;width:120px;height:26px;box-sizing:border-box;background:#f3f3f3;border:1px solid #c4c4c4;"></div>
<div class="a" style="left:649px;top:190px;width:118px;height:24px;box-sizing:border-box;border:1px solid #e6e6e6;"></div>
<div class="a" style="left:702.70px;top:196.5px;font:400 12px/12px 'Liberation Sans', sans-serif;color:#3c3c3c;white-space:nowrap;transform:scaleX(0.9111);transform-origin:0 0;">WOs</div>
<div class="a" style="left:648px;top:220px;width:120px;height:26px;box-sizing:border-box;background:#f3f3f3;border:1px solid #c4c4c4;"></div>
<div class="a" style="left:649px;top:221px;width:118px;height:24px;box-sizing:border-box;border:1px solid #e6e6e6;"></div>
<div class="a" style="left:691.67px;top:227.6px;font:400 12px/12px 'Liberation Sans', sans-serif;color:#3c3c3c;white-space:nowrap;transform:scaleX(0.9320);transform-origin:0 0;">Machines</div>
<div class="a" style="left:774px;top:189px;width:126px;height:26px;box-sizing:border-box;background:#f3f3f3;border:1px solid #c4c4c4;"></div>
<div class="a" style="left:775px;top:190px;width:124px;height:24px;box-sizing:border-box;border:1px solid #e6e6e6;"></div>
<div class="a" style="left:817.68px;top:196.5px;font:400 12px/12px 'Liberation Sans', sans-serif;color:#3c3c3c;white-space:nowrap;transform:scaleX(0.9207);transform-origin:0 0;">Employees</div>
<div class="a" style="left:774px;top:220px;width:126px;height:26px;box-sizing:border-box;background:#f3f3f3;border:1px solid #c4c4c4;"></div>
<div class="a" style="left:775px;top:221px;width:124px;height:24px;box-sizing:border-box;border:1px solid #e6e6e6;"></div>
<div class="a" style="left:831.80px;top:227.6px;font:400 12px/12px 'Liberation Sans', sans-serif;color:#3c3c3c;white-space:nowrap;transform:scaleX(0.9500);transform-origin:0 0;">Tools</div>
<div class="a" style="left:906px;top:189px;width:112px;height:26px;box-sizing:border-box;background:#f3f3f3;border:1px solid #c4c4c4;"></div>
<div class="a" style="left:907px;top:190px;width:110px;height:24px;box-sizing:border-box;border:1px solid #e6e6e6;"></div>
<div class="a" style="left:954.72px;top:196.5px;font:400 12px/12px 'Liberation Sans', sans-serif;color:#3c3c3c;white-space:nowrap;transform:scaleX(0.8812);transform-origin:0 0;">Loads</div>
<div class="a" style="left:906px;top:220px;width:54px;height:26px;box-sizing:border-box;background:#f3f3f3;border:1px solid #c4c4c4;"></div>
<div class="a" style="left:907px;top:221px;width:52px;height:24px;box-sizing:border-box;border:1px solid #e6e6e6;"></div>
<div class="a" style="left:964px;top:220px;width:54px;height:26px;box-sizing:border-box;background:#f3f3f3;border:1px solid #c4c4c4;"></div>
<div class="a" style="left:965px;top:221px;width:52px;height:24px;box-sizing:border-box;border:1px solid #e6e6e6;"></div>
<svg class="a" style="left:405px;top:225px;" width="18" height="17" viewBox="0 0 18 17"><path d="M17.77 5.59 L17.77 6.81 L16.10 7.56 L15.75 8.42 L16.39 10.13 L15.53 10.99 L13.82 10.35 L12.96 10.70 L12.21 12.37 L10.99 12.37 L10.24 10.70 L9.38 10.35 L7.67 10.99 L6.81 10.13 L7.45 8.42 L7.10 7.56 L5.43 6.81 L5.43 5.59 L7.10 4.84 L7.45 3.98 L6.81 2.27 L7.67 1.41 L9.38 2.05 L10.24 1.70 L10.99 0.03 L12.21 0.03 L12.96 1.70 L13.82 2.05 L15.53 1.41 L16.39 2.27 L15.75 3.98 L16.10 4.84Z" fill="#111"/><circle cx="11.6" cy="6.2" r="1.6" fill="#f3f3f3"/><path d="M10.17 11.04 L10.17 12.16 L8.79 12.86 L8.42 13.62 L8.74 15.14 L7.86 15.83 L6.46 15.19 L5.63 15.38 L4.64 16.57 L3.55 16.32 L3.18 14.82 L2.51 14.29 L0.97 14.26 L0.48 13.25 L1.42 12.03 L1.42 11.17 L0.48 9.95 L0.97 8.94 L2.51 8.91 L3.18 8.38 L3.55 6.88 L4.64 6.63 L5.63 7.82 L6.46 8.01 L7.86 7.37 L8.74 8.06 L8.42 9.58 L8.79 10.34Z" fill="#111"/><circle cx="5.2" cy="11.6" r="1.4" fill="#f3f3f3"/></svg>
<svg class="a" style="left:541px;top:227px;" width="16" height="13" viewBox="0 0 16 13"><path d="M1.8 5.8 L5.8 9.8 L14 2" fill="none" stroke="#222" stroke-width="3.6"/></svg>
<svg class="a" style="left:656px;top:194px;" width="19" height="17" viewBox="0 0 19 17"><ellipse cx="9.5" cy="7" rx="8.5" ry="6.5" fill="#111"/><path d="M3.5 11 L2.5 16 L8 12 Z" fill="#111"/><path d="M10.48 7.64 L10.48 8.36 L9.47 8.76 L9.25 9.22 L9.56 10.26 L9.00 10.71 L8.06 10.17 L7.56 10.29 L6.94 11.18 L6.24 11.02 L6.08 9.95 L5.67 9.63 L4.59 9.70 L4.28 9.06 L5.01 8.26 L5.01 7.74 L4.28 6.94 L4.59 6.30 L5.67 6.37 L6.08 6.05 L6.24 4.98 L6.94 4.82 L7.56 5.71 L8.06 5.83 L9.00 5.29 L9.56 5.74 L9.25 6.78 L9.47 7.24Z" fill="#cfcfcf"/><circle cx="7.3" cy="8" r="1" fill="#111"/><path d="M14.38 4.71 L14.38 5.29 L13.59 5.63 L13.41 6.01 L13.64 6.84 L13.18 7.20 L12.43 6.79 L12.01 6.89 L11.51 7.58 L10.94 7.45 L10.79 6.61 L10.46 6.34 L9.60 6.38 L9.35 5.86 L9.91 5.21 L9.91 4.79 L9.35 4.14 L9.60 3.62 L10.46 3.66 L10.79 3.39 L10.94 2.55 L11.51 2.42 L12.01 3.11 L12.43 3.21 L13.18 2.80 L13.64 3.16 L13.41 3.99 L13.59 4.37Z" fill="#cfcfcf"/><circle cx="11.8" cy="5" r="0.8" fill="#111"/></svg>
<svg class="a" style="left:656px;top:224px;" width="19" height="18" viewBox="0 0 19 18"><path d="M16.97 9.31 L16.97 10.69 L15.07 11.54 L14.67 12.50 L15.41 14.44 L14.44 15.41 L12.50 14.67 L11.54 15.07 L10.69 16.97 L9.31 16.97 L8.46 15.07 L7.50 14.67 L5.56 15.41 L4.59 14.44 L5.33 12.50 L4.93 11.54 L3.03 10.69 L3.03 9.31 L4.93 8.46 L5.33 7.50 L4.59 5.56 L5.56 4.59 L7.50 5.33 L8.46 4.93 L9.31 3.03 L10.69 3.03 L11.54 4.93 L12.50 5.33 L14.44 4.59 L15.41 5.56 L14.67 7.50 L15.07 8.46Z" fill="#555"/><circle cx="10" cy="10" r="3.2" fill="#f3f3f3"/><path d="M2.5 1.5 L9.5 10" stroke="#f3f3f3" stroke-width="4.5"/><path d="M2.5 1.8 L9.8 10" stroke="#222" stroke-width="2"/><circle cx="2.6" cy="2" r="1.6" fill="#222"/></svg>
<svg class="a" style="left:782px;top:194px;" width="19" height="17" viewBox="0 0 19 17"><circle cx="5" cy="3.6" r="2.7" fill="#111"/><path d="M1 10.5 Q1 6.8 5 6.8 Q7.2 6.8 8.2 7.8 V12.5 H1 Z" fill="#111"/><circle cx="11.5" cy="7.2" r="3.3" fill="#111"/><path d="M6.6 15.5 V13.2 Q6.6 10.8 11.5 10.8 Q16.5 10.8 16.5 13.2 V15.5 Z" fill="#111"/></svg>
<svg class="a" style="left:781px;top:224px;" width="19" height="18" viewBox="0 0 19 18"><path d="M6 6.5 L16 16.5" stroke="#111" stroke-width="3.2" stroke-linecap="round"/><circle cx="5" cy="5.2" r="4" fill="#111"/><path d="M3.6 3.8 L0 0.2" stroke="#f3f3f3" stroke-width="2.6"/><circle cx="3.8" cy="4" r="1.3" fill="#f3f3f3"/><path d="M16.6 2 L12.2 6.4" stroke="#111" stroke-width="4" stroke-linecap="round"/><path d="M12.5 6 L2.6 16" stroke="#111" stroke-width="2.2"/></svg>
<svg class="a" style="left:914px;top:193px;" width="18" height="18" viewBox="0 0 18 18"><rect x="1.5" y="1.5" width="14.6" height="14.6" rx="4.2" fill="none" stroke="#111" stroke-width="2.3"/><path d="M8.6 3.4 L4.6 10.2 H8.2 L6.6 15 L13.4 7.6 H9.9 L12.4 3.4 Z" fill="#111"/></svg>
<svg class="a" style="left:925px;top:226px;" width="18" height="17" viewBox="0 0 18 17"><circle cx="7" cy="7" r="5.5" fill="none" stroke="#111" stroke-width="2.3"/><path d="M11 11 L15.6 15.4" stroke="#111" stroke-width="2.6"/><path d="M4.2 7 H9.8" stroke="#111" stroke-width="2"/></svg>
<svg class="a" style="left:983px;top:226px;" width="18" height="17" viewBox="0 0 18 17"><circle cx="7" cy="7" r="5.5" fill="none" stroke="#111" stroke-width="2.3"/><path d="M11 11 L15.6 15.4" stroke="#111" stroke-width="2.6"/><path d="M4.2 7 H9.8 M7 4.2 V9.8" stroke="#111" stroke-width="2"/></svg>
<div class="a" style="left:1036px;top:180px;width:120px;height:16px;background:#90ee90;"></div>
<div class="a" style="left:1036px;top:197px;width:120px;height:17px;background:#0000ff;"></div>
<div class="a" style="left:1036px;top:214px;width:120px;height:1px;background:#ffffff;"></div>
<div class="a" style="left:1036px;top:215px;width:120px;height:17px;background:#ff0000;"></div>
<div class="a" style="left:1061.35px;top:183.5px;font:400 12px/12px 'Liberation Sans', sans-serif;color:#000;white-space:nowrap;transform:scaleX(1.0476);transform-origin:0 0;">Set-up Time</div>
<div class="a" style="left:1055.55px;top:200.1px;font:400 12px/12px 'Liberation Sans', sans-serif;color:#ffff00;white-space:nowrap;transform:scaleX(1.0527);transform-origin:0 0;">Manufacturing</div>
<div class="a" style="left:1059.59px;top:218.1px;font:400 12px/12px 'Liberation Sans', sans-serif;color:#ffff00;white-space:nowrap;transform:scaleX(1.0101);transform-origin:0 0;">Sub Contract</div>
<div class="a" style="left:1174px;top:184px;width:145px;height:30px;box-sizing:border-box;background:#f3f3f3;border:1px solid #c4c4c4;"></div>
<div class="a" style="left:1175px;top:185px;width:143px;height:28px;box-sizing:border-box;border:1px solid #e6e6e6;"></div>
<div class="a" style="left:1240.20px;top:193.1px;font:400 12px/12px 'Liberation Sans', sans-serif;color:#3c3c3c;white-space:nowrap;transform:scaleX(0.9600);transform-origin:0 0;">Close</div>
<svg class="a" style="left:1182px;top:190px;" width="18" height="18" viewBox="0 0 18 18"><path d="M2.5 2.5 L15 15 M15 2.5 L2.5 15" stroke="#e41e2a" stroke-width="4" stroke-linecap="round"/></svg>
<div class="a" style="left:2px;top:270px;width:1334px;height:1px;background:#8c8c8c;"></div>
<div class="a" style="left:2px;top:271px;width:347px;height:648px;background:#faefe5;"></div>
<div class="a" style="left:2px;top:271px;width:5px;height:632px;background:#f8f3ea;"></div>
<div class="a" style="left:7px;top:271px;width:34px;height:56px;background:#efefef;"></div>
<div class="a" style="left:41px;top:271px;width:304px;height:56px;background:linear-gradient(#f7f7f7 0%,#f2f2f2 50%,#e3e3e3 82%,#eaeaea 100%);"></div>
<div class="a" style="left:143px;top:271px;width:1px;height:56px;background:#dedede;"></div>
<div class="a" style="left:191px;top:271px;width:1px;height:56px;background:#dedede;"></div>
<div class="a" style="left:239px;top:271px;width:1px;height:56px;background:#dedede;"></div>
<svg class="a" style="left:15px;top:293px;" width="16" height="14" viewBox="0 0 16 14"><rect x="0" y="0" width="15" height="13" fill="#6b6b6b"/><rect x="1.3" y="1.3" width="3.4" height="2.9" fill="#fff"/><rect x="5.7" y="1.3" width="3.4" height="2.9" fill="#fff"/><rect x="1.3" y="5.2" width="3.4" height="2.9" fill="#fff"/><rect x="5.7" y="5.2" width="3.4" height="2.9" fill="#fff"/><rect x="1.3" y="9.1" width="3.4" height="2.9" fill="#fff"/><rect x="5.7" y="9.1" width="3.4" height="2.9" fill="#fff"/></svg>
<div class="a" style="left:64.30px;top:293.3px;font:400 12px/12px 'Liberation Sans', sans-serif;color:#3a3a3a;white-space:nowrap;transform:scaleX(0.9467);transform-origin:0 0;">Task Name</div>
<div class="a" style="left:155.46px;top:293.7px;font:400 12px/12px 'Liberation Sans', sans-serif;color:#3a3a3a;white-space:nowrap;transform:scaleX(0.9417);transform-origin:0 0;">Start</div>
<div class="a" style="left:199.50px;top:293.7px;font:400 12px/12px 'Liberation Sans', sans-serif;color:#3a3a3a;white-space:nowrap;">Finish</div>
<div class="a" style="left:249.58px;top:293.7px;font:400 12px/12px 'Liberation Sans', sans-serif;color:#3a3a3a;white-space:nowrap;transform:scaleX(0.9207);transform-origin:0 0;">Resource Names</div>
<div class="a" style="left:7px;top:328px;width:34px;height:19px;background:#efefef;"></div>
<div class="a" style="left:41px;top:328px;width:304px;height:19px;background:#e7e8ea;"></div>
<div class="a" style="left:7px;top:347px;width:338px;height:1px;background:#e2dcd6;"></div>
<div class="a" style="left:11.40px;top:331px;font:400 12px/12px 'Liberation Sans', sans-serif;color:#2a2a2a;white-space:nowrap;">1</div>
<div class="a" style="left:48px;top:334px;width:9px;height:8px;box-sizing:border-box;background:#ffffff;border:1px solid #cfcfcf;"></div>
<div class="a" style="left:50px;top:338px;width:5px;height:1px;background:#333;"></div>
<div class="a" style="left:62.60px;top:329.2px;font:700 12px/12px 'Liberation Sans', sans-serif;color:#2e3440;white-space:nowrap;transform:scaleX(1.0211);transform-origin:0 0;">OF12308 2.00</div>
<div class="a" style="left:150.20px;top:329.2px;font:700 12px/12px 'Liberation Sans', sans-serif;color:#cbcdcf;white-space:nowrap;transform:scaleX(1.0455);transform-origin:0 0;">24/05/</div>
<div class="a" style="left:197.90px;top:329.2px;font:700 12px/12px 'Liberation Sans', sans-serif;color:#cbcdcf;white-space:nowrap;transform:scaleX(1.0606);transform-origin:0 0;">26/05/</div>
<div class="a" style="left:7px;top:348px;width:34px;height:19px;background:#efefef;"></div>
<div class="a" style="left:41px;top:348px;width:304px;height:19px;background:#faeee3;"></div>
<div class="a" style="left:7px;top:367px;width:338px;height:1px;background:#e2dcd6;"></div>
<div class="a" style="left:12.40px;top:351px;font:400 12px/12px 'Liberation Sans', sans-serif;color:#2a2a2a;white-space:nowrap;transform:scaleX(0.8333);transform-origin:0 0;">2</div>
<div class="a" style="left:77.07px;top:349.3px;font:400 12px/12px 'Liberation Sans', sans-serif;color:#2a2a2a;white-space:nowrap;transform:scaleX(0.9281);transform-origin:0 0;">10 Mise en</div>
<div class="a" style="left:149.00px;top:349.9px;font:400 12px/12px 'Liberation Sans', sans-serif;color:#222;white-space:nowrap;transform:scaleX(0.8925);transform-origin:0 0;">24/05/2</div>
<div class="a" style="left:198.40px;top:349.9px;font:400 12px/12px 'Liberation Sans', sans-serif;color:#d2d2d2;white-space:nowrap;transform:scaleX(0.8500);transform-origin:0 0;">26/05/2</div>
<div class="a" style="left:245.56px;top:351px;font:400 12px/12px 'Liberation Sans', sans-serif;color:#222;white-space:nowrap;transform:scaleX(0.9351);transform-origin:0 0;">Sous-traité</div>
<div class="a" style="left:7px;top:368px;width:34px;height:19px;background:#efefef;"></div>
<div class="a" style="left:41px;top:368px;width:304px;height:19px;background:#ffffff;"></div>
<div class="a" style="left:7px;top:387px;width:338px;height:1px;background:#e2dcd6;"></div>
<div class="a" style="left:11.40px;top:371px;font:400 12px/12px 'Liberation Sans', sans-serif;color:#2a2a2a;white-space:nowrap;">3</div>
<div class="a" style="left:48px;top:374px;width:9px;height:8px;box-sizing:border-box;background:#ffffff;border:1px solid #cfcfcf;"></div>
<div class="a" style="left:50px;top:378px;width:5px;height:1px;background:#333;"></div>
<div class="a" style="left:62.60px;top:369.2px;font:700 12px/12px 'Liberation Sans', sans-serif;color:#2e3440;white-space:nowrap;transform:scaleX(1.0211);transform-origin:0 0;">OF12309 6.00</div>
<div class="a" style="left:150.20px;top:369.2px;font:700 12px/12px 'Liberation Sans', sans-serif;color:#cbcdcf;white-space:nowrap;transform:scaleX(1.0455);transform-origin:0 0;">24/05/</div>
<div class="a" style="left:197.90px;top:369.2px;font:700 12px/12px 'Liberation Sans', sans-serif;color:#cbcdcf;white-space:nowrap;transform:scaleX(1.0606);transform-origin:0 0;">26/05/</div>
<div class="a" style="left:7px;top:388px;width:34px;height:19px;background:#efefef;"></div>
<div class="a" style="left:41px;top:388px;width:304px;height:19px;background:#faeee3;"></div>
<div class="a" style="left:7px;top:407px;width:338px;height:1px;background:#e2dcd6;"></div>
<div class="a" style="left:12.40px;top:391px;font:400 12px/12px 'Liberation Sans', sans-serif;color:#2a2a2a;white-space:nowrap;transform:scaleX(0.7143);transform-origin:0 0;">4</div>
<div class="a" style="left:77.08px;top:389.3px;font:400 12px/12px 'Liberation Sans', sans-serif;color:#2a2a2a;white-space:nowrap;transform:scaleX(0.9183);transform-origin:0 0;">10 Peinture</div>
<div class="a" style="left:149.00px;top:389.9px;font:400 12px/12px 'Liberation Sans', sans-serif;color:#222;white-space:nowrap;transform:scaleX(0.8925);transform-origin:0 0;">24/05/2</div>
<div class="a" style="left:198.40px;top:389.9px;font:400 12px/12px 'Liberation Sans', sans-serif;color:#d2d2d2;white-space:nowrap;transform:scaleX(0.8500);transform-origin:0 0;">26/05/2</div>
<div class="a" style="left:245.56px;top:391px;font:400 12px/12px 'Liberation Sans', sans-serif;color:#222;white-space:nowrap;transform:scaleX(0.9351);transform-origin:0 0;">Sous-traité</div>
<div class="a" style="left:7px;top:408px;width:34px;height:19px;background:#efefef;"></div>
<div class="a" style="left:41px;top:408px;width:304px;height:19px;background:#ffffff;"></div>
<div class="a" style="left:7px;top:427px;width:338px;height:1px;background:#e2dcd6;"></div>
<div class="a" style="left:11.40px;top:411px;font:400 12px/12px 'Liberation Sans', sans-serif;color:#2a2a2a;white-space:nowrap;">5</div>
<div class="a" style="left:48px;top:414px;width:9px;height:8px;box-sizing:border-box;background:#ffffff;border:1px solid #cfcfcf;"></div>
<div class="a" style="left:50px;top:418px;width:5px;height:1px;background:#333;"></div>
<div class="a" style="left:62.60px;top:409.2px;font:700 12px/12px 'Liberation Sans', sans-serif;color:#2e3440;white-space:nowrap;transform:scaleX(1.0211);transform-origin:0 0;">OF12310 2.00</div>
<div class="a" style="left:150.20px;top:409.2px;font:700 12px/12px 'Liberation Sans', sans-serif;color:#cbcdcf;white-space:nowrap;transform:scaleX(1.0455);transform-origin:0 0;">24/05/</div>
<div class="a" style="left:197.90px;top:409.2px;font:700 12px/12px 'Liberation Sans', sans-serif;color:#cbcdcf;white-space:nowrap;transform:scaleX(1.0606);transform-origin:0 0;">27/05/</div>
<div class="a" style="left:7px;top:428px;width:34px;height:19px;background:#efefef;"></div>
<div class="a" style="left:41px;top:428px;width:304px;height:19px;background:#faeee3;"></div>
<div class="a" style="left:7px;top:447px;width:338px;height:1px;background:#e2dcd6;"></div>
<div class="a" style="left:12.40px;top:431px;font:400 12px/12px 'Liberation Sans', sans-serif;color:#2a2a2a;white-space:nowrap;transform:scaleX(0.8333);transform-origin:0 0;">6</div>
<div class="a" style="left:77.08px;top:429.3px;font:400 12px/12px 'Liberation Sans', sans-serif;color:#2a2a2a;white-space:nowrap;transform:scaleX(0.9183);transform-origin:0 0;">10 Peinture</div>
<div class="a" style="left:149.00px;top:429.9px;font:400 12px/12px 'Liberation Sans', sans-serif;color:#222;white-space:nowrap;transform:scaleX(0.8925);transform-origin:0 0;">24/05/2</div>
<div class="a" style="left:198.40px;top:429.9px;font:400 12px/12px 'Liberation Sans', sans-serif;color:#d2d2d2;white-space:nowrap;transform:scaleX(0.8500);transform-origin:0 0;">27/05/2</div>
<div class="a" style="left:245.54px;top:431px;font:400 12px/12px 'Liberation Sans', sans-serif;color:#222;white-space:nowrap;transform:scaleX(0.9552);transform-origin:0 0;">1_OP</div>
<div class="a" style="left:7px;top:448px;width:34px;height:19px;background:#efefef;"></div>
<div class="a" style="left:41px;top:448px;width:304px;height:19px;background:#ffffff;"></div>
<div class="a" style="left:7px;top:467px;width:338px;height:1px;background:#e2dcd6;"></div>
<div class="a" style="left:12.40px;top:451px;font:400 12px/12px 'Liberation Sans', sans-serif;color:#2a2a2a;white-space:nowrap;transform:scaleX(0.8333);transform-origin:0 0;">7</div>
<div class="a" style="left:78.00px;top:449.3px;font:400 12px/12px 'Liberation Sans', sans-serif;color:#2a2a2a;white-space:nowrap;transform:scaleX(0.9393);transform-origin:0 0;">20 Assembl</div>
<div class="a" style="left:149.00px;top:449.9px;font:400 12px/12px 'Liberation Sans', sans-serif;color:#222;white-space:nowrap;transform:scaleX(0.8925);transform-origin:0 0;">27/05/2</div>
<div class="a" style="left:198.40px;top:449.9px;font:400 12px/12px 'Liberation Sans', sans-serif;color:#d2d2d2;white-space:nowrap;transform:scaleX(0.8500);transform-origin:0 0;">27/05/2</div>
<div class="a" style="left:245.54px;top:451px;font:400 12px/12px 'Liberation Sans', sans-serif;color:#222;white-space:nowrap;transform:scaleX(0.9552);transform-origin:0 0;">1_OP</div>
<div class="a" style="left:7px;top:468px;width:34px;height:19px;background:#efefef;"></div>
<div class="a" style="left:41px;top:468px;width:304px;height:19px;background:#faeee3;"></div>
<div class="a" style="left:7px;top:487px;width:338px;height:1px;background:#e2dcd6;"></div>
<div class="a" style="left:12.40px;top:471px;font:400 12px/12px 'Liberation Sans', sans-serif;color:#2a2a2a;white-space:nowrap;transform:scaleX(0.8333);transform-origin:0 0;">8</div>
<div class="a" style="left:77.07px;top:469.3px;font:400 12px/12px 'Liberation Sans', sans-serif;color:#2a2a2a;white-space:nowrap;transform:scaleX(0.9254);transform-origin:0 0;">30 Emballa</div>
<div class="a" style="left:149.00px;top:469.9px;font:400 12px/12px 'Liberation Sans', sans-serif;color:#222;white-space:nowrap;transform:scaleX(0.8925);transform-origin:0 0;">27/05/2</div>
<div class="a" style="left:198.40px;top:469.9px;font:400 12px/12px 'Liberation Sans', sans-serif;color:#d2d2d2;white-space:nowrap;transform:scaleX(0.8500);transform-origin:0 0;">27/05/2</div>
<div class="a" style="left:245.54px;top:471px;font:400 12px/12px 'Liberation Sans', sans-serif;color:#222;white-space:nowrap;transform:scaleX(0.9552);transform-origin:0 0;">1_OP</div>
<div class="a" style="left:41px;top:327px;width:1px;height:160px;background:#d9d9d9;"></div>
<div class="a" style="left:143px;top:327px;width:1px;height:160px;background:#ece6e0;"></div>
<div class="a" style="left:191px;top:327px;width:1px;height:160px;background:#ece6e0;"></div>
<div class="a" style="left:239px;top:327px;width:1px;height:160px;background:#ece6e0;"></div>
<div class="a" style="left:345px;top:271px;width:1px;height:216px;background:#e0e0e0;"></div>
<div class="a" style="left:42px;top:328px;width:303px;height:20px;box-sizing:border-box;border:1px dotted #111;"></div>
<div class="a" style="left:349px;top:271px;width:1px;height:648px;background:#a09a96;"></div>
<div class="a" style="left:350px;top:271px;width:3px;height:648px;background:#fbf1e8;"></div>
<div class="a" style="left:353px;top:271px;width:1px;height:648px;background:#a09a96;"></div>
<div class="a" style="left:3px;top:903px;width:346px;height:16px;background:#d6d6d6;"></div>
<div class="a" style="left:3px;top:903px;width:5px;height:16px;background:#f8f3ea;"></div>
<div class="a" style="left:7px;top:903px;width:1px;height:16px;background:#a0a0a0;"></div>
<div class="a" style="left:8px;top:903px;width:17px;height:17px;box-sizing:border-box;background:#f0f0f0;border:1px solid #a0a0a0;"></div>
<svg class="a" style="left:14px;top:908px;" width="4" height="7" viewBox="0 0 4 7"><path d="M3.5 0.5 L3.5 6.5 L0.5 3.5 Z" fill="#555"/></svg>
<div class="a" style="left:332px;top:903px;width:17px;height:17px;box-sizing:border-box;background:#f0f0f0;border:1px solid #a0a0a0;"></div>
<svg class="a" style="left:339px;top:908px;" width="4" height="7" viewBox="0 0 4 7"><path d="M0.5 0.5 L0.5 6.5 L3.5 3.5 Z" fill="#555"/></svg>
<div class="a" style="left:354px;top:271px;width:961px;height:632px;background:#ffffff;"></div>
<div class="a" style="left:354px;top:271px;width:961px;height:56px;background:#f0f0f0;"></div>
<div class="a" style="left:354px;top:290px;width:961px;height:1px;background:#a0a0a0;"></div>
<div class="a" style="left:354px;top:309px;width:961px;height:1px;background:#a0a0a0;"></div>
<div class="a" style="left:354px;top:327px;width:961px;height:1px;background:#a0a0a0;"></div>
<div class="a" style="left:1242px;top:291px;width:1px;height:18px;background:#a0a0a0;"></div>
<div class="a" style="left:650px;top:328px;width:333px;height:575px;background:#e3f0fa;"></div>
<div class="a" style="left:391px;top:310px;width:1px;height:17px;background:#a0a0a0;"></div>
<div class="a" style="left:391px;top:328px;width:1px;height:575px;background:#e3e3e3;"></div>
<div class="a" style="left:428px;top:310px;width:1px;height:17px;background:#a0a0a0;"></div>
<div class="a" style="left:428px;top:328px;width:1px;height:575px;background:#e3e3e3;"></div>
<div class="a" style="left:465px;top:310px;width:1px;height:17px;background:#a0a0a0;"></div>
<div class="a" style="left:465px;top:328px;width:1px;height:575px;background:#e3e3e3;"></div>
<div class="a" style="left:502px;top:310px;width:1px;height:17px;background:#a0a0a0;"></div>
<div class="a" style="left:502px;top:328px;width:1px;height:575px;background:#e3e3e3;"></div>
<div class="a" style="left:539px;top:310px;width:1px;height:17px;background:#a0a0a0;"></div>
<div class="a" style="left:539px;top:328px;width:1px;height:575px;background:#e3e3e3;"></div>
<div class="a" style="left:576px;top:310px;width:1px;height:17px;background:#a0a0a0;"></div>
<div class="a" style="left:576px;top:328px;width:1px;height:575px;background:#e3e3e3;"></div>
<div class="a" style="left:613px;top:310px;width:1px;height:17px;background:#a0a0a0;"></div>
<div class="a" style="left:613px;top:328px;width:1px;height:575px;background:#e3e3e3;"></div>
<div class="a" style="left:650px;top:310px;width:1px;height:17px;background:#a0a0a0;"></div>
<div class="a" style="left:650px;top:328px;width:1px;height:575px;background:#8fbde0;"></div>
<div class="a" style="left:687px;top:310px;width:1px;height:17px;background:#a0a0a0;"></div>
<div class="a" style="left:687px;top:328px;width:1px;height:575px;background:#8fbde0;"></div>
<div class="a" style="left:724px;top:310px;width:1px;height:17px;background:#a0a0a0;"></div>
<div class="a" style="left:724px;top:328px;width:1px;height:575px;background:#8fbde0;"></div>
<div class="a" style="left:761px;top:310px;width:1px;height:17px;background:#a0a0a0;"></div>
<div class="a" style="left:761px;top:328px;width:1px;height:575px;background:#8fbde0;"></div>
<div class="a" style="left:798px;top:310px;width:1px;height:17px;background:#a0a0a0;"></div>
<div class="a" style="left:798px;top:328px;width:1px;height:575px;background:#8fbde0;"></div>
<div class="a" style="left:835px;top:310px;width:1px;height:17px;background:#a0a0a0;"></div>
<div class="a" style="left:835px;top:328px;width:1px;height:575px;background:#8fbde0;"></div>
<div class="a" style="left:872px;top:310px;width:1px;height:17px;background:#a0a0a0;"></div>
<div class="a" style="left:872px;top:328px;width:1px;height:575px;background:#8fbde0;"></div>
<div class="a" style="left:909px;top:310px;width:1px;height:17px;background:#a0a0a0;"></div>
<div class="a" style="left:909px;top:328px;width:1px;height:575px;background:#8fbde0;"></div>
<div class="a" style="left:946px;top:310px;width:1px;height:17px;background:#a0a0a0;"></div>
<div class="a" style="left:946px;top:328px;width:1px;height:575px;background:#8fbde0;"></div>
<div class="a" style="left:983px;top:310px;width:1px;height:17px;background:#a0a0a0;"></div>
<div class="a" style="left:983px;top:328px;width:1px;height:575px;background:#e3e3e3;"></div>
<div class="a" style="left:1020px;top:310px;width:1px;height:17px;background:#a0a0a0;"></div>
<div class="a" style="left:1020px;top:328px;width:1px;height:575px;background:#e3e3e3;"></div>
<div class="a" style="left:1057px;top:310px;width:1px;height:17px;background:#a0a0a0;"></div>
<div class="a" style="left:1057px;top:328px;width:1px;height:575px;background:#e3e3e3;"></div>
<div class="a" style="left:1094px;top:310px;width:1px;height:17px;background:#a0a0a0;"></div>
<div class="a" style="left:1094px;top:328px;width:1px;height:575px;background:#e3e3e3;"></div>
<div class="a" style="left:1131px;top:310px;width:1px;height:17px;background:#a0a0a0;"></div>
<div class="a" style="left:1131px;top:328px;width:1px;height:575px;background:#e3e3e3;"></div>
<div class="a" style="left:1168px;top:310px;width:1px;height:17px;background:#a0a0a0;"></div>
<div class="a" style="left:1168px;top:328px;width:1px;height:575px;background:#e3e3e3;"></div>
<div class="a" style="left:1205px;top:310px;width:1px;height:17px;background:#a0a0a0;"></div>
<div class="a" style="left:1205px;top:328px;width:1px;height:575px;background:#e3e3e3;"></div>
<div class="a" style="left:1242px;top:310px;width:1px;height:17px;background:#a0a0a0;"></div>
<div class="a" style="left:1242px;top:328px;width:1px;height:575px;background:#e3e3e3;"></div>
<div class="a" style="left:1279px;top:310px;width:1px;height:17px;background:#a0a0a0;"></div>
<div class="a" style="left:1279px;top:328px;width:1px;height:575px;background:#e3e3e3;"></div>
<div class="a" style="left:366.50px;top:312.4px;font:400 12px/12px 'Liberation Sans', sans-serif;color:#333;white-space:nowrap;">00</div>
<div class="a" style="left:403.50px;top:312.4px;font:400 12px/12px 'Liberation Sans', sans-serif;color:#333;white-space:nowrap;">01</div>
<div class="a" style="left:440.50px;top:312.4px;font:400 12px/12px 'Liberation Sans', sans-serif;color:#333;white-space:nowrap;">02</div>
<div class="a" style="left:477.50px;top:312.4px;font:400 12px/12px 'Liberation Sans', sans-serif;color:#333;white-space:nowrap;">03</div>
<div class="a" style="left:514.50px;top:312.4px;font:400 12px/12px 'Liberation Sans', sans-serif;color:#333;white-space:nowrap;">04</div>
<div class="a" style="left:551.50px;top:312.4px;font:400 12px/12px 'Liberation Sans', sans-serif;color:#333;white-space:nowrap;">05</div>
<div class="a" style="left:588.50px;top:312.4px;font:400 12px/12px 'Liberation Sans', sans-serif;color:#333;white-space:nowrap;">06</div>
<div class="a" style="left:625.50px;top:312.4px;font:400 12px/12px 'Liberation Sans', sans-serif;color:#333;white-space:nowrap;">07</div>
<div class="a" style="left:662.50px;top:312.4px;font:400 12px/12px 'Liberation Sans', sans-serif;color:#333;white-space:nowrap;">08</div>
<div class="a" style="left:699.50px;top:312.4px;font:400 12px/12px 'Liberation Sans', sans-serif;color:#333;white-space:nowrap;">09</div>
<div class="a" style="left:736.00px;top:312.4px;font:400 12px/12px 'Liberation Sans', sans-serif;color:#333;white-space:nowrap;">10</div>
<div class="a" style="left:773.50px;top:312.4px;font:400 12px/12px 'Liberation Sans', sans-serif;color:#333;white-space:nowrap;">11</div>
<div class="a" style="left:810.00px;top:312.4px;font:400 12px/12px 'Liberation Sans', sans-serif;color:#333;white-space:nowrap;">12</div>
<div class="a" style="left:847.00px;top:312.4px;font:400 12px/12px 'Liberation Sans', sans-serif;color:#333;white-space:nowrap;">13</div>
<div class="a" style="left:884.00px;top:312.4px;font:400 12px/12px 'Liberation Sans', sans-serif;color:#333;white-space:nowrap;">14</div>
<div class="a" style="left:921.00px;top:312.4px;font:400 12px/12px 'Liberation Sans', sans-serif;color:#333;white-space:nowrap;">15</div>
<div class="a" style="left:958.00px;top:312.4px;font:400 12px/12px 'Liberation Sans', sans-serif;color:#333;white-space:nowrap;">16</div>
<div class="a" style="left:995.00px;top:312.4px;font:400 12px/12px 'Liberation Sans', sans-serif;color:#333;white-space:nowrap;">17</div>
<div class="a" style="left:1032.00px;top:312.4px;font:400 12px/12px 'Liberation Sans', sans-serif;color:#333;white-space:nowrap;">18</div>
<div class="a" style="left:1069.00px;top:312.4px;font:400 12px/12px 'Liberation Sans', sans-serif;color:#333;white-space:nowrap;">19</div>
<div class="a" style="left:1106.50px;top:312.4px;font:400 12px/12px 'Liberation Sans', sans-serif;color:#333;white-space:nowrap;">20</div>
<div class="a" style="left:1143.50px;top:312.4px;font:400 12px/12px 'Liberation Sans', sans-serif;color:#333;white-space:nowrap;">21</div>
<div class="a" style="left:1180.50px;top:312.4px;font:400 12px/12px 'Liberation Sans', sans-serif;color:#333;white-space:nowrap;">22</div>
<div class="a" style="left:1217.50px;top:312.4px;font:400 12px/12px 'Liberation Sans', sans-serif;color:#333;white-space:nowrap;">23</div>
<div class="a" style="left:1254.50px;top:312.4px;font:400 12px/12px 'Liberation Sans', sans-serif;color:#333;white-space:nowrap;">00</div>
<div class="a" style="left:1291.50px;top:312.4px;font:400 12px/12px 'Liberation Sans', sans-serif;color:#333;white-space:nowrap;">01</div>
<div class="a" style="left:808.20px;top:274.5px;font:400 12px/12px 'Liberation Sans', sans-serif;color:#333;white-space:nowrap;transform:scaleX(0.9103);transform-origin:0 0;">20 mai, '19</div>
<div class="a" style="left:802.20px;top:294px;font:400 12px/12px 'Liberation Sans', sans-serif;color:#333;white-space:nowrap;transform:scaleX(0.9500);transform-origin:0 0;">v</div>
<div class="a" style="left:1269.00px;top:294px;font:400 12px/12px 'Liberation Sans', sans-serif;color:#333;white-space:nowrap;">s</div>
<svg class="a" style="left:358px;top:276px;" width="7" height="8.5" viewBox="0 0 7 8.5"><path d="M6.5 0.5 L6.5 8.0 L0.5 4.25 Z" fill="#333"/></svg>
<svg class="a" style="left:1305px;top:276px;" width="7" height="8.5" viewBox="0 0 7 8.5"><path d="M0.5 0.5 L0.5 8.0 L6.5 4.25 Z" fill="#333"/></svg>
<svg class="a" style="left:358px;top:296px;" width="7" height="8.5" viewBox="0 0 7 8.5"><path d="M6.5 0.5 L6.5 8.0 L0.5 4.25 Z" fill="#333"/></svg>
<svg class="a" style="left:1305px;top:296px;" width="7" height="8.5" viewBox="0 0 7 8.5"><path d="M0.5 0.5 L0.5 8.0 L6.5 4.25 Z" fill="#333"/></svg>
<div class="a" style="left:724px;top:332px;width:591px;height:6px;background:#666666;box-shadow:inset 0 0 0 1px #3a3a3a;"></div>
<svg class="a" style="left:719px;top:332px;" width="12" height="12" viewBox="0 0 12 12"><path d="M0.5 0.5 H11 V6 L5.75 11 L0.5 6 Z" fill="#555" stroke="#333" stroke-width="1"/></svg>
<div class="a" style="left:724px;top:352px;width:595px;height:9px;box-sizing:border-box;border:1.5px solid #2f8ad8;border-radius:4.5px;background:#d2e6f7;"></div>
<div class="a" style="left:724px;top:372px;width:591px;height:6px;background:#666666;box-shadow:inset 0 0 0 1px #3a3a3a;"></div>
<svg class="a" style="left:719px;top:372px;" width="12" height="12" viewBox="0 0 12 12"><path d="M0.5 0.5 H11 V6 L5.75 11 L0.5 6 Z" fill="#555" stroke="#333" stroke-width="1"/></svg>
<div class="a" style="left:724px;top:392px;width:595px;height:9px;box-sizing:border-box;border:1.5px solid #2f8ad8;border-radius:4.5px;background:#d2e6f7;"></div>
<div class="a" style="left:1205px;top:412px;width:110px;height:6px;background:#666666;box-shadow:inset 0 0 0 1px #3a3a3a;"></div>
<svg class="a" style="left:1200px;top:412px;" width="12" height="12" viewBox="0 0 12 12"><path d="M0.5 0.5 H11 V6 L5.75 11 L0.5 6 Z" fill="#555" stroke="#333" stroke-width="1"/></svg>
<div class="a" style="left:1205px;top:432px;width:114px;height:9px;box-sizing:border-box;border:1.5px solid #2f8ad8;border-radius:4px;background:#a6a6a6;box-shadow:inset 0 0 0 1px #9a8a80;"></div>
<div class="a" style="left:1315px;top:271px;width:16px;height:632px;background:#d6d6d6;"></div>
<div class="a" style="left:1315px;top:271px;width:17px;height:17px;box-sizing:border-box;background:#f0f0f0;border:1px solid #a0a0a0;"></div>
<svg class="a" style="left:1320px;top:277px;" width="7" height="4.5" viewBox="0 0 7 4.5"><path d="M0.5 4.0 L6.5 4.0 L3.5 0.5 Z" fill="#555"/></svg>
<div class="a" style="left:1315px;top:886px;width:17px;height:17px;box-sizing:border-box;background:#f0f0f0;border:1px solid #a0a0a0;"></div>
<svg class="a" style="left:1320px;top:893px;" width="7" height="4.5" viewBox="0 0 7 4.5"><path d="M0.5 0.5 L6.5 0.5 L3.5 4.0 Z" fill="#555"/></svg>
<div class="a" style="left:1331px;top:271px;width:3px;height:648px;background:#fbf1e8;"></div>
<div class="a" style="left:1334px;top:271px;width:1px;height:648px;background:#a09a96;"></div>
<div class="a" style="left:354px;top:903px;width:961px;height:16px;background:#d6d6d6;"></div>
<div class="a" style="left:354px;top:903px;width:961px;height:1px;background:#a0a0a0;"></div>
<div class="a" style="left:354px;top:903px;width:17px;height:17px;box-sizing:border-box;background:#ffffff;border:1px solid #a0a0a0;"></div>
<svg class="a" style="left:360px;top:908px;" width="4" height="7" viewBox="0 0 4 7"><path d="M3.5 0.5 L3.5 6.5 L0.5 3.5 Z" fill="#555"/></svg>
<div class="a" style="left:699px;top:903px;width:600px;height:17px;box-sizing:border-box;background:#ffffff;border:1px solid #a0a0a0;"></div>
<div class="a" style="left:1298px;top:903px;width:17px;height:17px;box-sizing:border-box;background:#ffffff;border:1px solid #a0a0a0;"></div>
<svg class="a" style="left:1305px;top:908px;" width="4" height="7" viewBox="0 0 4 7"><path d="M0.5 0.5 L0.5 6.5 L3.5 3.5 Z" fill="#555"/></svg>
<div class="a" style="left:1315px;top:903px;width:17px;height:16px;background:#fbf1e8;"></div>
<div class="a" style="left:0px;top:0px;width:1338px;height:1px;background:#16387a;"></div>
<div class="a" style="left:1px;top:171px;width:1px;height:748px;background:#3a3d3d;"></div>
<div class="a" style="left:2px;top:172px;width:1px;height:747px;background:#f8f8f8;"></div>
<div class="a" style="left:1336px;top:171px;width:1px;height:748px;background:#3a3d3d;"></div>
<div class="a" style="left:1335px;top:172px;width:1px;height:747px;background:#f8f8f8;"></div>
<div class="a" style="left:1px;top:1px;width:1px;height:30px;background:#d8dcdc;"></div>
<div class="a" style="left:1px;top:55px;width:1px;height:116px;background:#d8dcdc;"></div>
<div class="a" style="left:0px;top:0px;width:1px;height:919px;background:#123f8e;"></div>
<div class="a" style="left:1337px;top:0px;width:1px;height:919px;background:#134a8a;"></div></body></html>
